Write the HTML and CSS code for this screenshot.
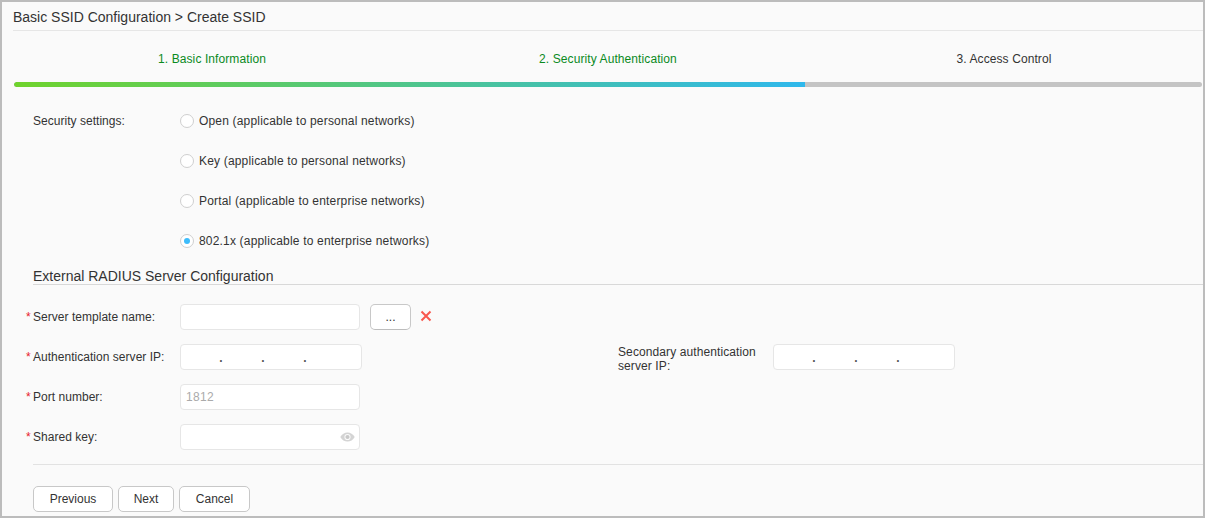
FILE: index.html
```html
<!DOCTYPE html>
<html lang="en">
<head>
<meta charset="utf-8">
<title>Create SSID</title>
<link rel="stylesheet" href="styles.css">
</head>
<body>
<main class="frame">
  <h1 class="crumb">Basic SSID Configuration &gt; Create SSID</h1>
  <ol class="steps">
    <li class="step done">1. Basic Information</li>
    <li class="step done">2. Security Authentication</li>
    <li class="step">3. Access Control</li>
  </ol>
  <div class="progress"><div class="progress-fill"></div></div>

  <div class="security">
    <div class="sec-label">Security settings:</div>
    <div class="radios">
      <div class="radio-row"><span class="radio"></span><span class="radio-text">Open (applicable to personal networks)</span></div>
      <div class="radio-row"><span class="radio"></span><span class="radio-text">Key (applicable to personal networks)</span></div>
      <div class="radio-row"><span class="radio"></span><span class="radio-text">Portal (applicable to enterprise networks)</span></div>
      <div class="radio-row"><span class="radio on"></span><span class="radio-text">802.1x (applicable to enterprise networks)</span></div>
    </div>
  </div>

  <h2 class="section">External RADIUS Server Configuration</h2>

  <div class="form">
    <div class="row">
      <label class="label"><span class="req">*</span>Server template name:</label>
      <div class="input w180"></div>
      <button class="btn dots" type="button">...</button>
      <svg class="del" width="12" height="12" viewBox="0 0 12 12"><path d="M1.500 1.500 10.500 10.500M10.500 1.500 1.500 10.500" stroke="#f8584f" stroke-width="2" fill="none"/></svg>
    </div>
    <div class="row">
      <label class="label"><span class="req">*</span>Authentication server IP:</label>
      <div class="input ip"><span>.</span><span>.</span><span>.</span></div>
      <label class="label second">Secondary authentication server IP:</label>
      <div class="input ip"><span>.</span><span>.</span><span>.</span></div>
    </div>
    <div class="row">
      <label class="label"><span class="req">*</span>Port number:</label>
      <div class="input w180 hint">1812</div>
    </div>
    <div class="row">
      <label class="label"><span class="req">*</span>Shared key:</label>
      <div class="input w180 with-eye">
        <svg class="eye" width="15" height="10" viewBox="0 0 15 10"><path d="M.3 5C2 2 4.600.4 7.500.4S13 2 14.700 5C13 8 10.400 9.600 7.500 9.600S2 8 .3 5Z" fill="#d4d4d4"/><circle cx="7.500" cy="5" r="3.100" fill="#fafafa"/><circle cx="7.500" cy="5" r="2.100" fill="#c8c8c8"/></svg>
      </div>
    </div>
  </div>

  <div class="actions">
    <button class="btn prev" type="button">Previous</button>
    <button class="btn next" type="button">Next</button>
    <button class="btn cancel" type="button">Cancel</button>
  </div>
</main>
</body>
</html>
```

FILE: styles.css
```css
* { box-sizing: border-box; }
html, body { margin: 0; padding: 0; }
body {
  width: 1205px;
  height: 518px;
  overflow: hidden;
  font-family: "Liberation Sans", Arial, sans-serif;
  font-size: 12px;
  color: #333;
}
.frame {
  width: 1205px;
  height: 518px;
  border: 2px solid #bcbcbc;
  background: #fafafa;
  padding-left: 11px;
  overflow: hidden;
}
.crumb {
  margin: 0;
  height: 29px;
  border-bottom: 1px solid #e6e6e6;
  font-size: 14px;
  font-weight: 400;
  line-height: 30px;
  color: #333;
}
.steps {
  list-style: none;
  margin: 0 0 0 1px;
  padding: 0;
  display: grid;
  grid-template-columns: repeat(3, 396px);
  height: 51px;
}
.step {
  text-align: center;
  line-height: 57px;
  letter-spacing: .09px;
  color: #333;
}
.step.done { color: #0a8a1e; }
.progress {
  margin-left: 1px;
  width: 1188px;
  height: 5px;
  border-radius: 3px;
  background: #c4c4c4;
  overflow: hidden;
}
.progress-fill {
  width: 791px;
  height: 5px;
  background: linear-gradient(90deg, #6fd32c, #2fb8ec);
  border-radius: 3px 0 0 3px;
}
.security {
  display: flex;
  margin: 13px 0 0 20px;
}
.sec-label { width: 147px; line-height: 42px; letter-spacing: .03px; }
.radio-row {
  display: flex;
  align-items: center;
  height: 40px;
  padding-top: 2px;
}
.radio-text { letter-spacing: .18px; }
.radio {
  width: 14px;
  height: 14px;
  margin-right: 5px;
  border: 1px solid #cfcfcf;
  border-radius: 50%;
  background: #fff;
  display: flex;
  align-items: center;
  justify-content: center;
}
.radio.on::after {
  content: "";
  width: 6px;
  height: 6px;
  border-radius: 50%;
  background: #3dbcfb;
}
.section {
  margin: 6px 0 0 20px;
  height: 19px;
  border-bottom: 1px solid #d8d8d8;
  font-size: 14px;
  font-weight: 400;
  line-height: 21px;
  color: #333;
}
.form { margin: 12px 0 0 13px; }
.row {
  display: flex;
  align-items: center;
  height: 40px;
}
.label {
  width: 154px;
  flex: none;
  letter-spacing: .03px;
}
.req { display: inline-block; width: 7px; color: #e8202a; }
.input {
  height: 26px;
  border: 1px solid #e6e6e6;
  border-radius: 4px;
  background: #fff;
}
.w180 { width: 180px; }
.hint { color: #aaa; padding-left: 5px; line-height: 24px; letter-spacing: .3px; }
.ip {
  width: 182px;
  display: flex;
  padding-left: 19px;
  line-height: 26px;
  font-weight: 700;
  color: #555;
}
.ip span { width: 42px; text-align: center; }
.second {
  width: 155px;
  margin-left: 256px;
  padding-top: 3px;
  line-height: 14px;
  letter-spacing: .1px;
}
.with-eye {
  display: flex;
  align-items: center;
  justify-content: flex-end;
  padding-right: 4px;
}
.btn {
  height: 26px;
  border: 1px solid #c8c8c8;
  border-radius: 5px;
  background: #fff;
  font-family: inherit;
  font-size: 12px;
  color: #333;
  padding: 0;
}
.dots { width: 41px; margin-left: 10px; border-bottom-color: #bdbdbd; }
.del { margin: 0 0 2px 9px; }
.actions {
  display: flex;
  gap: 5px;
  margin: 7px 0 0 20px;
  padding-top: 21px;
  border-top: 1px solid #e2e2e2;
}
.prev { width: 80px; }
.next { width: 56px; }
.cancel { width: 71px; }
```
